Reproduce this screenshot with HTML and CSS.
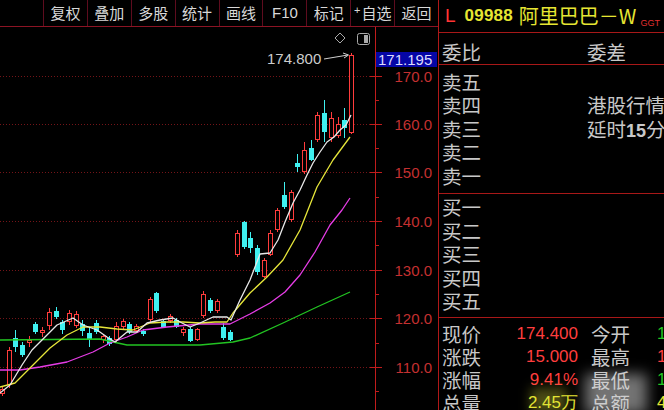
FILE: index.html
```html
<!DOCTYPE html>
<html lang="zh">
<head>
<meta charset="utf-8">
<title>09988 阿里巴巴-W</title>
<link rel="stylesheet" href="styles.css">
</head>
<body>
<div class="app">
  <div class="left">
    <div class="toolbar">
      <div class="tb">复权</div>
      <div class="tb">叠加</div>
      <div class="tb">多股</div>
      <div class="tb">统计</div>
      <div class="tb">画线</div>
      <div class="tb lat">F10</div>
      <div class="tb">标记</div>
      <div class="tb"><span class="plus">+</span>自选</div>
      <div class="tb">返回</div>
    </div>
    <svg class="chart" viewBox="0 27 438 383" width="438" height="383" xmlns="http://www.w3.org/2000/svg">
      <g class="grid">
        <line x1="0" y1="76.5" x2="370" y2="76.5"/>
        <line x1="0" y1="124.5" x2="370" y2="124.5"/>
        <line x1="0" y1="172.5" x2="370" y2="172.5"/>
        <line x1="0" y1="221.5" x2="370" y2="221.5"/>
        <line x1="0" y1="270.5" x2="370" y2="270.5"/>
        <line x1="0" y1="318.5" x2="370" y2="318.5"/>
        <line x1="0" y1="367.5" x2="370" y2="367.5"/>
      </g>
      <g id="candles"></g>
      <polyline class="ma ma60" points="0,340 100,339 113,342 127,345 200,345 233,342 250,338 283,323 317,307 350,292"/>
      <polyline class="ma ma30" points="0,370 20,370 40,367 67,362 93,352 110,343 127,337 143,330 167,327 200,324 230,324 250,314 270,303 285,292 300,275 315,252 330,225 342,210 350,198"/>
      <polyline class="ma ma10" points="0,387 15,383 33,365 50,348 67,335 83,327 100,327 117,329 133,330 150,323 167,322 183,322 200,323 215,322 227,322 233,313 250,293 267,277 283,260 300,230 317,187 333,160 350,137"/>
      <polyline class="ma ma5" points="0,393 10,385 22,365 32,350 40,342 57,325 73,318 83,325 97,330 107,337 115,342 127,332 137,332 147,323 160,320 173,318 182,323 190,327 200,323 213,317 227,317 231,320 240,300 250,280 260,254 270,253 278,240 285,222 293,203 300,190 307,175 313,163 320,152 327,142 334,137 340,130 346,125 351,115"/>
      <g class="axis">
        <line x1="375.5" y1="27" x2="375.5" y2="410"/>
        <line x1="370" y1="76.5" x2="382" y2="76.5"/>
        <line x1="370" y1="124.5" x2="382" y2="124.5"/>
        <line x1="370" y1="172.5" x2="382" y2="172.5"/>
        <line x1="370" y1="221.5" x2="382" y2="221.5"/>
        <line x1="370" y1="270.5" x2="382" y2="270.5"/>
        <line x1="370" y1="318.5" x2="382" y2="318.5"/>
        <line x1="370" y1="367.5" x2="382" y2="367.5"/>
        <line x1="375" y1="100.5" x2="379" y2="100.5"/>
        <line x1="375" y1="148.5" x2="379" y2="148.5"/>
        <line x1="375" y1="197.5" x2="379" y2="197.5"/>
        <line x1="375" y1="245.5" x2="379" y2="245.5"/>
        <line x1="375" y1="294.5" x2="379" y2="294.5"/>
        <line x1="375" y1="343.5" x2="379" y2="343.5"/>
        <line x1="375" y1="391.5" x2="379" y2="391.5"/>
      </g>
      <g class="alabels">
        <text x="432" y="82">170.0</text>
        <text x="432" y="130">160.0</text>
        <text x="432" y="178">150.0</text>
        <text x="432" y="227">140.0</text>
        <text x="432" y="276">130.0</text>
        <text x="432" y="324">120.0</text>
        <text x="432" y="373">110.0</text>
      </g>
      <rect class="curbox" x="376" y="52" width="61" height="15"/>
      <text class="curtxt" x="378" y="65">171.195</text>
      <text class="hightxt" x="267" y="64">174.800</text>
      <line class="arrow" x1="324" y1="59" x2="348" y2="55"/>
      <polyline class="arrow" points="343,53 348.5,55 344,58"/>
      <polygon class="icon" points="340,33 345,38 340,43 335,38"/>
      <rect class="icon" x="357.5" y="33.5" width="12" height="11" rx="2"/>
      <rect class="iconfill" x="364" y="35" width="4" height="8"/>
    </svg>
  </div>
  <div class="panel">
    <div class="hdr">
      <span class="mk">L</span>
      <span class="code">09988</span>
      <span class="name">阿里巴巴－W</span>
      <span class="ggt">GGT</span>
    </div>
    <div class="wb">
      <span class="c1">委比</span><span class="c2">委差</span>
    </div>
    <div class="book sells">
      <div class="brow"><span class="c1">卖五</span></div>
      <div class="brow"><span class="c1">卖四</span><span class="c2">港股行情</span></div>
      <div class="brow"><span class="c1">卖三</span><span class="c2">延时<b class="num">15</b>分钟</span></div>
      <div class="brow"><span class="c1">卖二</span></div>
      <div class="brow"><span class="c1">卖一</span></div>
    </div>
    <div class="book buys">
      <div class="brow"><span class="c1">买一</span></div>
      <div class="brow"><span class="c1">买二</span></div>
      <div class="brow"><span class="c1">买三</span></div>
      <div class="brow"><span class="c1">买四</span></div>
      <div class="brow"><span class="c1">买五</span></div>
    </div>
    <div class="stats">
      <div class="srow"><span class="lab">现价</span><span class="val red">174.400</span><span class="lab2">今开</span><span class="val2 green">160.000</span></div>
      <div class="srow"><span class="lab">涨跌</span><span class="val red">15.000</span><span class="lab2">最高</span><span class="val2 red">174.800</span></div>
      <div class="srow"><span class="lab">涨幅</span><span class="val red">9.41%</span><span class="lab2">最低</span><span class="val2 green">158.900</span></div>
      <div class="srow"><span class="lab">总量</span><span class="val yel">2.45万</span><span class="lab2">总额</span><span class="val2 yel">41.8亿</span></div>
    </div>
    <div class="smear"></div>
    <div class="smear2"></div>
  </div>
</div>
<script src="chart.js"></script>
</body>
</html>
```

FILE: styles.css
```css
* { box-sizing: border-box; margin: 0; padding: 0; }
html, body { background: #000; }
body {
  width: 664px;
  height: 410px;
  overflow: hidden;
  font-family: "Noto Sans CJK SC", "Liberation Sans", sans-serif;
  color: #c8c8c8;
}
.app { display: flex; width: 664px; height: 410px; }
.left { width: 438px; flex: none; display: flex; flex-direction: column; }
.toolbar {
  height: 27px;
  border-bottom: 1px solid #8c1424;
  display: flex;
  padding-left: 43px;
}
.tb {
  flex: 1;
  border-left: 1px solid #5e0c1e;
  display: flex;
  align-items: center;
  justify-content: center;
  font-size: 15px;
  line-height: 1;
  color: #d8d8d8;
  padding-bottom: 1px;
}
.tb.lat { font-family: "Liberation Sans", sans-serif; font-size: 15px; }
.plus { font-family: "Liberation Sans", sans-serif; font-size: 11px; margin-right: 1px; position: relative; top: -2px; }
.chart { display: block; width: 438px; height: 383px; }
.grid line { stroke: #741418; stroke-width: 1; stroke-dasharray: 1 2; }
.ma { fill: none; stroke-width: 1.3; stroke-linejoin: round; }
.ma5 { stroke: #e8e8e8; }
.ma10 { stroke: #e6e63a; }
.ma30 { stroke: #e63ce6; }
.ma60 { stroke: #22c422; }
.axis line { stroke: #c01c1c; stroke-width: 1; }
.alabels text { font-family: "Liberation Sans", sans-serif; font-size: 15px; fill: #c43030; text-anchor: end; }
.curbox { fill: #0606a6; }
.curtxt { font-family: "Liberation Sans", sans-serif; font-size: 15px; fill: #dcdcff; }
.hightxt { font-family: "Liberation Sans", sans-serif; font-size: 15px; fill: #cccccc; }
.arrow { stroke: #d0d0d0; stroke-width: 1; fill: none; }
.icon { fill: none; stroke: #aaaaaa; stroke-width: 1; }
.iconfill { fill: #aaaaaa; }

.panel {
  width: 226px;
  flex: none;
  border-left: 1px solid #b01818;
  overflow: hidden;
  position: relative;
  white-space: nowrap;
}
.hdr {
  height: 33px;
  border-bottom: 1px solid #a81818;
  display: flex;
  align-items: center;
  padding-left: 6px;
  padding-bottom: 1px;
}
.mk { font-family: "Liberation Sans", sans-serif; font-size: 19px; color: #ff3434; margin-right: 9px; }
.code { font-family: "Liberation Sans", sans-serif; font-weight: bold; font-size: 17px; color: #e6e632; margin-right: 6px; letter-spacing: 0.2px; }
.name { font-size: 20px; color: #e6e632; line-height: 1; }
.ggt { font-family: "Liberation Sans", sans-serif; font-size: 9px; color: #e03030; align-self: flex-end; margin-left: 4px; margin-bottom: 3px; }

.wb {
  height: 32px;
  border-bottom: 1px solid #a81818;
  display: flex;
  padding: 7px 0 0 3px;
  font-size: 19.5px;
  line-height: 23.5px;
}
.c1 { width: 145px; flex: none; }
.c2 { flex: none; }
.book {
  border-bottom: 1px solid #a81818;
  padding-left: 3px;
  font-size: 19.5px;
  line-height: 23.5px;
}
.sells { height: 129px; padding-top: 4.5px; }
.buys { height: 124px; padding-top: 1.25px; }
.brow { display: flex; height: 23.5px; }
.num { font-family: "Liberation Sans", sans-serif; font-weight: bold; font-size: 18px; }

.stats { padding: 3.5px 0 0 3px; }
.srow { display: flex; height: 23px; line-height: 23px; align-items: center; }
.lab, .lab2 { font-size: 19.5px; width: 39px; flex: none; }
.lab2 { margin-left: 13px; }
.val {
  width: 97px;
  flex: none;
  text-align: right;
  font-family: "Liberation Sans", sans-serif;
  font-size: 17px;
}
.val2 {
  margin-left: 27px;
  flex: none;
  font-family: "Liberation Sans", sans-serif;
  font-size: 17px;
}
.red { color: #ff3e3e; }
.green { color: #22c822; }
.yel { color: #e6e632; }
.smear {
  position: absolute;
  left: 146px;
  top: 374px;
  width: 62px;
  height: 40px;
  background: rgba(210, 210, 210, 0.55);
  filter: blur(7px);
}
.smear2 {
  position: absolute;
  left: 92px;
  top: 388px;
  width: 36px;
  height: 26px;
  background: rgba(220, 220, 60, 0.35);
  filter: blur(6px);
}
```

FILE: chart.js
```js
(function () {
  var NS = 'http://www.w3.org/2000/svg';
  var g = document.getElementById('candles');
  if (!g) return;
  // [index, bodyTop, bodyBottom, high, low, up]
  var D = [
    [-1, 389, 394, 386, 396, 1],
    [0, 350, 385, 347, 388, 1],
    [1, 338, 347, 330, 352, 0],
    [2, 345, 355, 342, 357, 0],
    [3, 340, 343, 336, 347, 1],
    [4, 324, 332, 322, 334, 0],
    [5, 330, 333, 327, 337, 1],
    [6, 312, 326, 308, 330, 1],
    [7, 311, 317, 307, 319, 0],
    [8, 322, 330, 320, 334, 0],
    [9, 313, 322, 310, 325, 1],
    [10, 314, 326, 311, 328, 1],
    [11, 324, 331, 320, 336, 0],
    [12, 333, 340, 327, 347, 0],
    [13, 323, 332, 320, 334, 0],
    [14, 336, 340, 334, 343, 1],
    [15, 338, 344, 336, 346, 0],
    [16, 326, 340, 322, 343, 1],
    [17, 321, 327, 319, 330, 1],
    [18, 324, 332, 322, 334, 0],
    [19, 326, 331, 324, 333, 1],
    [20, 331, 334, 329, 336, 0],
    [21, 299, 320, 297, 323, 1],
    [22, 293, 311, 292, 313, 0],
    [23, 321, 327, 319, 328, 0],
    [24, 316, 321, 314, 323, 1],
    [25, 320, 327, 318, 328, 0],
    [26, 329, 333, 327, 336, 1],
    [27, 329, 341, 327, 342, 0],
    [28, 329, 340, 328, 341, 1],
    [29, 294, 316, 291, 318, 1],
    [30, 300, 311, 298, 313, 0],
    [31, 301, 311, 299, 313, 1],
    [32, 327, 338, 323, 340, 0],
    [33, 332, 340, 330, 341, 0],
    [34, 233, 255, 230, 257, 1],
    [35, 222, 247, 221, 249, 0],
    [36, 238, 248, 232, 253, 0],
    [37, 248, 272, 245, 275, 0],
    [38, 260, 277, 258, 278, 1],
    [39, 233, 255, 230, 256, 1],
    [40, 210, 230, 208, 232, 1],
    [41, 195, 207, 182, 209, 0],
    [42, 192, 220, 190, 222, 1],
    [43, 163, 167, 154, 172, 0],
    [44, 150, 172, 142, 174, 1],
    [45, 148, 160, 140, 161, 0],
    [46, 115, 140, 112, 142, 1],
    [47, 113, 132, 100, 142, 0],
    [48, 118, 138, 112, 142, 1],
    [49, 124, 136, 117, 138, 1],
    [50, 120, 128, 108, 138, 0],
    [51, 55, 133, 53, 134, 1]
  ];
  function el(n, a) {
    var e = document.createElementNS(NS, n);
    for (var k in a) e.setAttribute(k, a[k]);
    g.appendChild(e);
    return e;
  }
  D.forEach(function (d) {
    var x = Math.round(8.5 + 6.716 * d[0]) + 0.5;
    var up = d[5] === 1;
    var col = up ? '#ff3c3c' : '#3ff0f0';
    if (up) {
      el('line', { x1: x, x2: x, y1: d[3], y2: d[1], stroke: col });
      el('line', { x1: x, x2: x, y1: d[2], y2: d[4], stroke: col });
      el('rect', { x: x - 2, y: d[1] + 0.5, width: 4, height: Math.max(d[2] - d[1] - 1, 1), fill: '#000', stroke: col });
    } else {
      el('line', { x1: x, x2: x, y1: d[3], y2: d[4], stroke: col });
      el('rect', { x: x - 2.5, y: d[1], width: 5, height: Math.max(d[2] - d[1], 1), fill: col });
    }
  });
})();
```
